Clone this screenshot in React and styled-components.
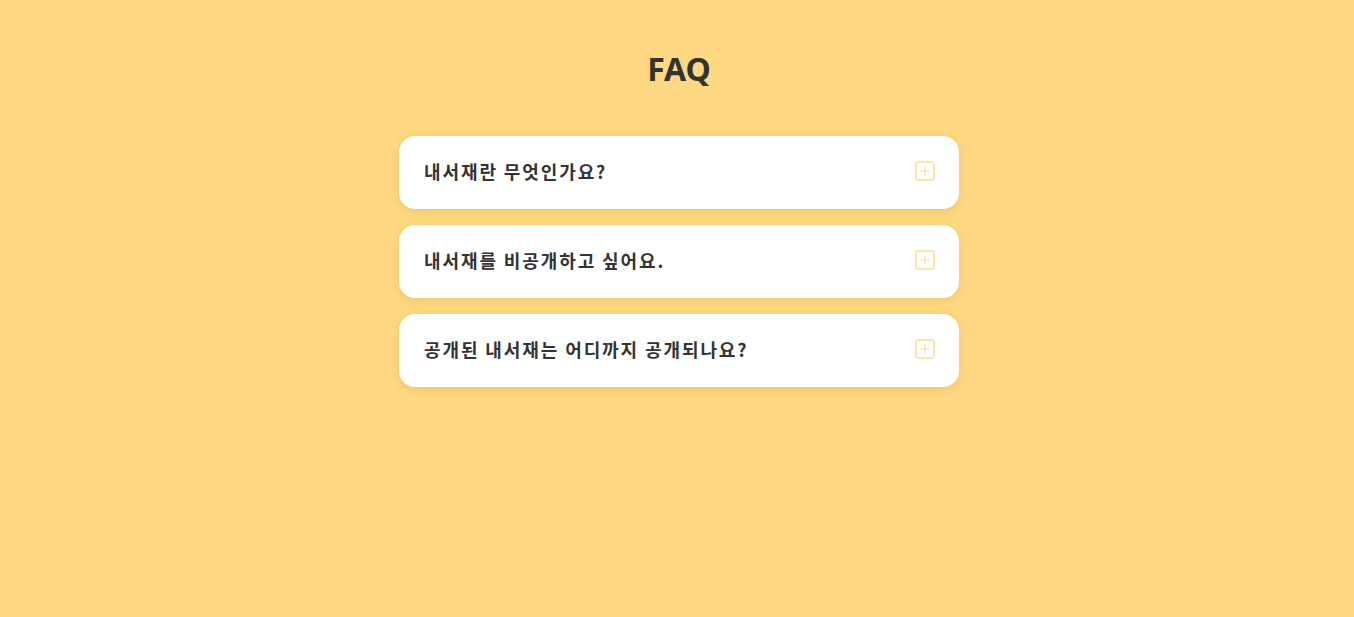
import React from "react";
import styled, { createGlobalStyle } from "styled-components";

const GlobalStyle = createGlobalStyle`
  body {
    margin: 0;
    background: #fed982;
    font-family: "Noto Sans", "Noto Sans CJK KR", sans-serif;
  }
`;

const Page = styled.div`
  display: flex;
  flex-direction: column;
  align-items: center;
  min-height: 617px;
  padding: 46px 0 0 4px;
  box-sizing: border-box;
`;

const Title = styled.h1`
  margin: 0 0 44px;
  font-size: 32px;
  font-weight: 700;
  color: #333333;
  line-height: 46px;
`;

const List = styled.div`
  display: flex;
  flex-direction: column;
  gap: 16px;
  width: 560px;
`;

const Item = styled.div`
  display: flex;
  align-items: center;
  justify-content: space-between;
  height: 73px;
  padding: 0 24px 3px 25px;
  box-sizing: border-box;
  background: #ffffff;
  border-radius: 16px;
  box-shadow: 0 2px 8px rgba(200, 160, 60, 0.35);
`;

const Question = styled.span`
  font-family: "Noto Sans CJK KR", sans-serif;
  font-size: 18px;
  font-weight: 700;
  letter-spacing: 1.9px;
  color: #333333;
`;

const PlusIcon = () => (
  <svg width="20" height="20" viewBox="0 0 20 20" fill="none">
    <rect x="1" y="1" width="18" height="18" rx="2" stroke="#fedd8c" strokeWidth="1.5" />
    <path d="M10 5.5v9M5.5 10h9" stroke="#fedd8c" strokeWidth="1.2" />
  </svg>
);

const questions = [
  "내서재란 무엇인가요?",
  "내서재를 비공개하고 싶어요.",
  "공개된 내서재는 어디까지 공개되나요?",
];

export default function App() {
  return (
    <>
      <GlobalStyle />
      <Page>
        <Title>FAQ</Title>
        <List>
          {questions.map((q) => (
            <Item key={q}>
              <Question>{q}</Question>
              <PlusIcon />
            </Item>
          ))}
        </List>
      </Page>
    </>
  );
}
